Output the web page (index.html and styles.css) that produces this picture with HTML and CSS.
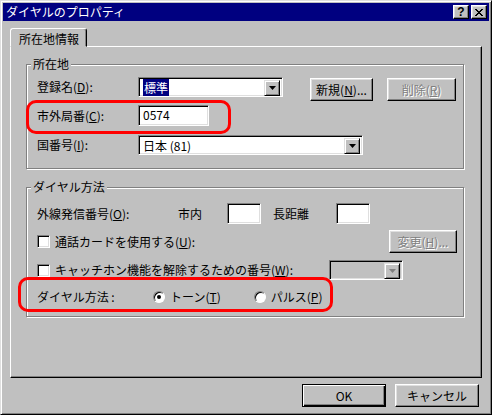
FILE: index.html
```html
<!DOCTYPE html>
<html lang="ja">
<head>
    <meta charset="UTF-8">
    <title>ダイヤルのプロパティ</title>
    <link rel="stylesheet" href="styles.css">
</head>
<body>
    <div class="window">
        <div class="titlebar">
            <span class="title">ダイヤルのプロパティ</span>
            <div class="caption">
                <span class="cap-btn cap-help">?</span>
                <span class="cap-btn">
                    <svg width="8" height="7" viewBox="0 0 8 7" shape-rendering="crispEdges">
                        <path d="M0 0h2v1h-2zM6 0h2v1h-2zM1 1h2v1h-2zM5 1h2v1h-2zM2 2h4v1h-4zM3 3h2v1h-2zM2 4h4v1h-4zM1 5h2v1h-2zM5 5h2v1h-2zM0 6h2v1h-2zM6 6h2v1h-2z" fill="#000"/>
                    </svg>
                </span>
            </div>
        </div>

        <div class="content">
            <div class="tabs">
                <div class="tab">所在地情報</div>
            </div>
            <div class="panel">
                <fieldset class="group group-place">
                    <legend>所在地</legend>
                    <div class="row row-name">
                        <span class="label">登録名(<u>D</u>):</span>
                        <div class="combo combo-name">
                            <span class="combo-text"><span class="selected">標準</span></span>
                            <span class="arrow-btn"><svg width="7" height="4" viewBox="0 0 7 4"><path d="M0 0h7l-3.5 4z" fill="#000"/></svg></span>
                        </div>
                        <span class="btn btn-new">新規(<u>N</u>)...</span>
                        <span class="btn btn-del disabled">削除(<u>R</u>)</span>
                    </div>
                    <div class="row row-area">
                        <span class="label">市外局番(<u>C</u>):</span>
                        <div class="field field-area">0574</div>
                    </div>
                    <div class="row row-country">
                        <span class="label">国番号(<u>I</u>):</span>
                        <div class="combo combo-country">
                            <span class="combo-text">日本 (81)</span>
                            <span class="arrow-btn"><svg width="7" height="4" viewBox="0 0 7 4"><path d="M0 0h7l-3.5 4z" fill="#000"/></svg></span>
                        </div>
                    </div>
                </fieldset>

                <fieldset class="group group-dial">
                    <legend>ダイヤル方法</legend>
                    <div class="row row-prefix">
                        <span class="label">外線発信番号(<u>O</u>):</span>
                        <span class="sub-label sub-local">市内</span>
                        <div class="field field-small"></div>
                        <span class="sub-label sub-long">長距離</span>
                        <div class="field field-small"></div>
                    </div>
                    <div class="row row-card">
                        <span class="check"></span>
                        <span class="check-text">通話カードを使用する(<u>U</u>):</span>
                        <span class="btn btn-change disabled">変更(<u>H</u>)...</span>
                    </div>
                    <div class="row row-wait">
                        <span class="check"></span>
                        <span class="check-text">キャッチホン機能を解除するための番号(<u>W</u>):</span>
                        <div class="combo combo-wait disabled">
                            <span class="combo-text"></span>
                            <span class="arrow-btn"><svg width="7" height="4" viewBox="0 0 7 4"><path d="M0 0h7l-3.5 4z" fill="#808080"/></svg></span>
                        </div>
                    </div>
                    <div class="row row-method">
                        <span class="label label-method">ダイヤル方法 :</span>
                        <span class="radio checked"></span>
                        <span class="radio-text">トーン(<u>T</u>)</span>
                        <span class="radio radio-pulse"></span>
                        <span class="radio-text">パルス(<u>P</u>)</span>
                    </div>
                </fieldset>
            </div>

            <div class="actions">
                <span class="btn btn-action btn-default">OK</span>
                <span class="btn btn-action">キャンセル</span>
            </div>
        </div>

        <div class="mark mark-area"></div>
        <div class="mark mark-method"></div>
    </div>
</body>
</html>
```

FILE: styles.css
```css
body {
    margin: 0;
    font-family: "Noto Sans CJK JP", "Liberation Sans", sans-serif;
    font-size: 12px;
    line-height: 14px;
    color: #000;
    background: #c0c0c0;
}
u {
    text-decoration: underline;
    text-underline-offset: 1px;
}
.window {
    position: relative;
    width: 492px;
    height: 415px;
    box-sizing: border-box;
    padding: 2px;
    background: #c0c0c0;
    border: 1px solid;
    border-color: #dfdfdf #000 #000 #dfdfdf;
    box-shadow: inset 1px 1px #fff, inset -1px -1px #808080;
}
.titlebar {
    height: 18px;
    display: flex;
    align-items: center;
    justify-content: space-between;
    padding: 0 2px 0 3px;
    background: #000080;
    color: #fff;
}
.caption {
    display: flex;
    gap: 2px;
}
.cap-btn {
    width: 16px;
    height: 14px;
    box-sizing: border-box;
    display: flex;
    align-items: center;
    justify-content: center;
    background: #c0c0c0;
    border: 1px solid;
    border-color: #fff #000 #000 #fff;
    box-shadow: inset -1px -1px #808080, inset 1px 1px #dfdfdf;
}
.cap-help {
    color: #000;
    font-family: "Liberation Sans", sans-serif;
    font-weight: bold;
    font-size: 12px;
    line-height: 12px;
}
.content {
    padding: 7px 7px 0 7px;
}
.tabs {
    display: flex;
}
.tab {
    position: relative;
    z-index: 1;
    width: 77px;
    height: 19px;
    box-sizing: border-box;
    margin-bottom: -1px;
    padding: 3px 0 0 8px;
    background: #c0c0c0;
    border: 1px solid;
    border-color: #fff #000 #c0c0c0 #fff;
    border-radius: 3px 3px 0 0;
    box-shadow: inset -1px 0 #808080;
}
.panel {
    height: 332px;
    box-sizing: border-box;
    padding-top: 1px;
    border: 1px solid;
    border-color: #fff #000 #000 #fff;
    box-shadow: inset -1px -1px #808080;
}
.group {
    width: 438px;
    box-sizing: border-box;
    margin: 9px 0 0 15px;
    padding: 0 0 0 10px;
    border: 1px solid #808080;
    box-shadow: inset 1px 1px #fff, 1px 1px #fff;
}
.group legend {
    margin-left: -6px;
    padding: 0 2px;
    background: #c0c0c0;
}
.group-place {
    padding-bottom: 13px;
}
.group-dial {
    margin-top: 11px;
    padding-bottom: 12px;
}
.row {
    display: flex;
    align-items: center;
}
.label {
    width: 101px;
    flex: none;
}
.row-name {
    margin-top: 6px;
    align-items: flex-start;
}
.row-name .label {
    margin-top: 3px;
}
.row-area {
    margin-top: 4px;
}
.row-country {
    margin-top: 9px;
}
.field {
    height: 21px;
    box-sizing: border-box;
    padding: 2px 0 0 4px;
    background: #fff;
    border: 1px solid;
    border-color: #808080 #fff #fff #808080;
    box-shadow: inset 1px 1px #000, inset -1px -1px #dfdfdf;
}
.field-area {
    width: 71px;
}
.combo {
    height: 20px;
    box-sizing: border-box;
    display: flex;
    justify-content: space-between;
    padding: 2px;
    background: #fff;
    border: 1px solid;
    border-color: #808080 #fff #fff #808080;
    box-shadow: inset 1px 1px #000, inset -1px -1px #dfdfdf;
}
.combo-text {
    padding: 1px 0 0 2px;
}
.selected {
    background: #000080;
    color: #fff;
    padding: 0 1px;
}
.combo-name {
    width: 145px;
}
.combo-country {
    width: 225px;
}
.combo.disabled {
    background: #c0c0c0;
}
.arrow-btn {
    width: 16px;
    height: 16px;
    box-sizing: border-box;
    display: flex;
    align-items: center;
    justify-content: center;
    background: #c0c0c0;
    border: 1px solid;
    border-color: #dfdfdf #000 #000 #dfdfdf;
    box-shadow: inset 1px 1px #fff, inset -1px -1px #808080;
}
.btn {
    height: 23px;
    box-sizing: border-box;
    display: flex;
    align-items: center;
    justify-content: center;
    flex: none;
    background: #c0c0c0;
    border: 1px solid;
    border-color: #fff #000 #000 #fff;
    box-shadow: inset -1px -1px #808080, inset 1px 1px #dfdfdf;
}
.btn.disabled {
    color: #808080;
    text-shadow: 1px 1px #fff;
}
.btn-new {
    width: 63px;
    margin: 1px 0 0 27px;
}
.btn-del {
    width: 69px;
    margin: 1px 0 0 14px;
}
.row-prefix {
    margin-top: 9px;
}
.sub-label {
    flex: none;
}
.sub-local {
    margin-left: 40px;
    margin-right: 25px;
}
.sub-long {
    margin-left: 12px;
    margin-right: 27px;
}
.field-small {
    width: 34px;
}
.check {
    width: 13px;
    height: 13px;
    box-sizing: border-box;
    flex: none;
    background: #fff;
    border: 1px solid;
    border-color: #808080 #fff #fff #808080;
    box-shadow: inset 1px 1px #000, inset -1px -1px #dfdfdf;
}
.check-text {
    margin-left: 5px;
}
.row-card {
    margin-top: 6px;
}
.btn-change {
    width: 68px;
    margin-left: auto;
    margin-right: 6px;
}
.row-wait {
    margin-top: 7px;
    height: 20px;
}
.combo-wait {
    width: 74px;
    margin-left: auto;
    margin-right: 60px;
}
.row-method {
    margin-top: 10px;
}
.label-method {
    width: 116px;
}
.radio {
    width: 12px;
    height: 12px;
    box-sizing: border-box;
    flex: none;
    position: relative;
    border-radius: 50%;
    background: #fff;
    border: 1px solid;
    border-color: #808080 #fff #fff #808080;
    box-shadow: inset 1px 1px #000;
}
.radio.checked::after {
    content: "";
    position: absolute;
    left: 3px;
    top: 3px;
    width: 4px;
    height: 4px;
    border-radius: 50%;
    background: #000;
}
.radio-text {
    margin-left: 5px;
}
.radio-pulse {
    margin-left: 33px;
}
.actions {
    display: flex;
    justify-content: flex-end;
    gap: 9px;
    margin-top: 6px;
    padding-right: 3px;
}
.btn-action {
    width: 84px;
}
.btn-default {
    border-color: #000;
    box-shadow: inset 1px 1px #fff, inset -1px -1px #000, inset -2px -2px #808080;
}
.mark {
    position: absolute;
    border: 3px solid #f00;
    border-radius: 10px;
}
.mark-area {
    left: 25px;
    top: 99px;
    width: 199px;
    height: 28px;
}
.mark-method {
    left: 17px;
    top: 276px;
    width: 309px;
    height: 29px;
}
```
